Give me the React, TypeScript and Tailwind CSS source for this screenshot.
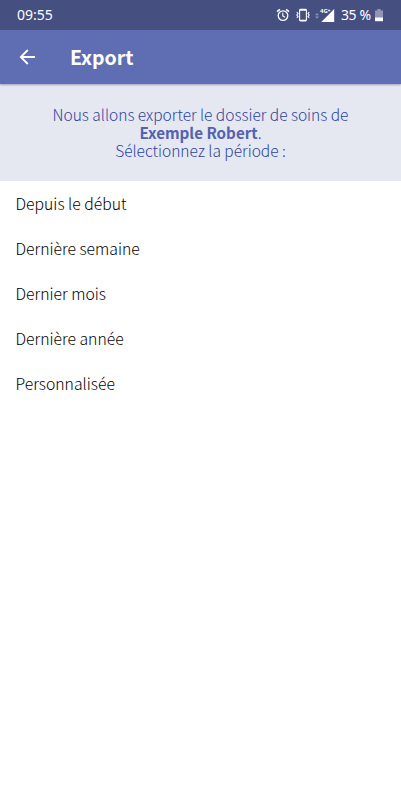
import React from "react";

const periods = [
  "Depuis le début",
  "Dernière semaine",
  "Dernier mois",
  "Dernière année",
  "Personnalisée",
];

const AlarmIcon = () => (
  <svg width="14" height="14" viewBox="0 0 14 14" fill="none" stroke="currentColor">
    <circle cx="7" cy="7.6" r="4.8" strokeWidth="1.3" />
    <path d="M1 3.7 3.9 1.3M13 3.7 10.1 1.3" strokeWidth="1.5" />
    <path d="M6.8 4.8v3.1l2.3 1.4" strokeWidth="1.1" />
  </svg>
);

const VibrateIcon = () => (
  <svg width="14" height="14" viewBox="0 0 14 14" fill="none" stroke="currentColor">
    <rect x="3.6" y="1.4" width="6.8" height="11.6" rx="0.9" strokeWidth="1.1" />
    <path d="M4 2.1h6M4 12.3h6" strokeWidth="1.2" />
    <path d="M.8 4.2 2 5.5.8 7 2 8.5.8 9.8M13.2 4.2 12 5.5 13.2 7 12 8.5 13.2 9.8" strokeWidth="1.1" />
  </svg>
);

const SignalIcon = () => (
  <svg width="20" height="15" viewBox="0 0 20 15" fill="currentColor">
    <path d="M0 7.2 2 5l2 2.2zM0 8.6 2 10.8l2-2.2z" opacity="0.4" />
    <path d="M19.2 1v13H6.3z" />
    <text x="5" y="5.4" fontSize="6" fontWeight="700" fontFamily="Noto Sans, sans-serif">
      4G
    </text>
    <path d="M12.9 2.5h2.4M14.1 1.3v2.4" stroke="currentColor" strokeWidth="0.7" />
  </svg>
);

const BatteryIcon = () => (
  <svg width="8" height="13" viewBox="0 0 8 13" fill="currentColor">
    <path d="M2.3 0h3.4v1.4H8v7H0v-7h2.3z" opacity="0.4" />
    <path d="M0 8.4h8v3.8H0z" />
  </svg>
);

export default function App() {
  return (
    <div className="h-[800px] w-[401px] overflow-hidden bg-white font-['Noto_Sans_CJK_SC',sans-serif]">
      {/* Barre de statut */}
      <div className="flex h-[30px] items-center bg-[#454f80] pl-[17px] pr-[18px] font-['Noto_Sans',sans-serif] text-white">
        <span className="text-[14px] leading-5">09:55</span>
        <div className="ml-auto flex items-center">
          <AlarmIcon />
          <span className="ml-1.5">
            <VibrateIcon />
          </span>
          <span className="ml-[5px]">
            <SignalIcon />
          </span>
          <span className="ml-[6px] w-[34px] whitespace-nowrap text-[14px] leading-5 tracking-[-0.4px]">35 %</span>
          <BatteryIcon />
        </div>
      </div>

      <header className="relative flex h-[54px] items-center bg-[#5f6eb2] pl-[19px] text-white shadow-[0_1px_2px_rgba(60,70,120,0.45)]">
        <svg width="17" height="16" viewBox="0 0 17 16" fill="none" stroke="currentColor" strokeWidth="1.8">
          <path d="M16 8H2M8.8 1 1.8 8l7 7" />
        </svg>
        <h1 className="ml-[34px] text-[19.5px] font-bold leading-7">Export</h1>
      </header>

      <p className="h-[97px] bg-[#e6e8f1] pt-[21px] text-center text-[15.5px] font-light leading-[18px] text-[#2c42a2]">
        Nous allons exporter le dossier de soins de
        <br />
        <b className="text-[15.2px] font-bold text-[#5062b0]">Exemple Robert</b>.
        <br />
        Sélectionnez la période :
      </p>

      <ul>
        {periods.map((period) => (
          <li key={period} className="h-[45px] pl-[15.5px] pt-3 text-[15.75px] font-light leading-[22px] text-black">
            {period}
          </li>
        ))}
      </ul>
    </div>
  );
}
